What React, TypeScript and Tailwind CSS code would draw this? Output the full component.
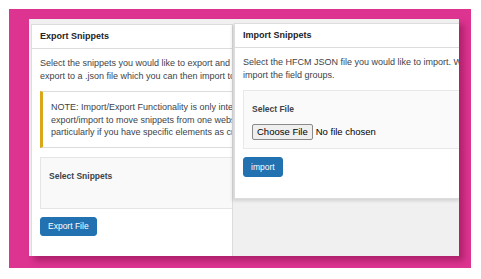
import React from 'react';

const font = { fontFamily: '"Liberation Sans", Arial, sans-serif' };

const Panel: React.FC<{ title: string; className: string; children: React.ReactNode }> = ({ title, className, children }) => (
  <div className={`bg-white border border-[#dcdcde] overflow-hidden shrink-0 ${className}`}>
    <div className="h-[24px] border-b border-[#dcdcde] flex items-center pl-[8px] text-[9px] font-bold text-[#1d2327] whitespace-nowrap">
      {title}
    </div>
    <div className="pl-[8px] pt-[8px]">{children}</div>
  </div>
);

const App: React.FC = () => {
  return (
    <div className="w-[481px] h-[279px] bg-white p-[9px]" style={font}>
      {/* Pink frame */}
      <div className="w-[462px] h-[259px] bg-[#dd3391] pl-[20px] pt-[10px]">
        {/* Screenshot, cropped on the right */}
        <div className="w-[430px] h-[237px] bg-[#f0f0f0] overflow-hidden flex items-start pt-[5px] pl-[2px] shadow-[5px_5px_6px_rgba(90,0,40,0.35)]">
          <Panel title="Export Snippets" className="w-[202px] h-[240px]">
            <div className="text-[9px] leading-[13px] text-[#3c434a] whitespace-nowrap">
              <p>Select the snippets you would like to export and t</p>
              <p>export to a .json file which you can then import to</p>
            </div>
            <div className="mt-[8px] w-[400px] h-[57px] border border-[#dcdcde] border-l-[3px] border-l-[#dba617] pl-[8px] pt-[9px] text-[9px] leading-[12.5px] text-[#3c434a] whitespace-nowrap">
              <p>NOTE: Import/Export Functionality is only inter</p>
              <p>export/import to move snippets from one webs</p>
              <p>particularly if you have specific elements as cr</p>
            </div>
            <div className="mt-[9px] w-[400px] h-[52px] bg-[#f9f9f9] border border-[#e5e5e5] pl-[8px] pt-[12px] text-[8.5px] font-bold text-[#3c434a] whitespace-nowrap">
              Select Snippets
            </div>
            <button className="mt-[8px] h-[19px] px-[7px] rounded-[3px] bg-[#2271b1] border border-[#2271b1] text-white text-[8.5px] leading-none">
              Export File
            </button>
          </Panel>
          <Panel
            title="Import Snippets"
            className="w-[227px] h-[176px] ml-[1px] -mt-[1px] shadow-[-2px_2px_3px_rgba(0,0,0,0.12)]"
          >
            <div className="text-[9px] leading-[13px] text-[#3c434a] whitespace-nowrap">
              <p>Select the HFCM JSON file you would like to import. Wh</p>
              <p>import the field groups.</p>
            </div>
            <div className="mt-[8px] w-[400px] h-[59px] bg-[#fafafa] border border-[#e8e8e8] pl-[8px] pt-[12px]">
              <div className="text-[8.5px] font-bold text-[#3c434a] whitespace-nowrap">Select File</div>
              <div className="mt-[8px] flex items-center gap-[3px] whitespace-nowrap">
                <span className="h-[16px] px-[4px] flex items-center bg-[#efefef] border border-[#8a8a8a] rounded-[2px] text-[9.5px] text-black">
                  Choose File
                </span>
                <span className="text-[9.5px] text-black">No file chosen</span>
              </div>
            </div>
            <button className="mt-[8px] h-[20px] px-[7px] rounded-[3px] bg-[#2271b1] border border-[#2271b1] text-white text-[8.5px] leading-none">
              import
            </button>
          </Panel>
        </div>
      </div>
    </div>
  );
};

export default App;
